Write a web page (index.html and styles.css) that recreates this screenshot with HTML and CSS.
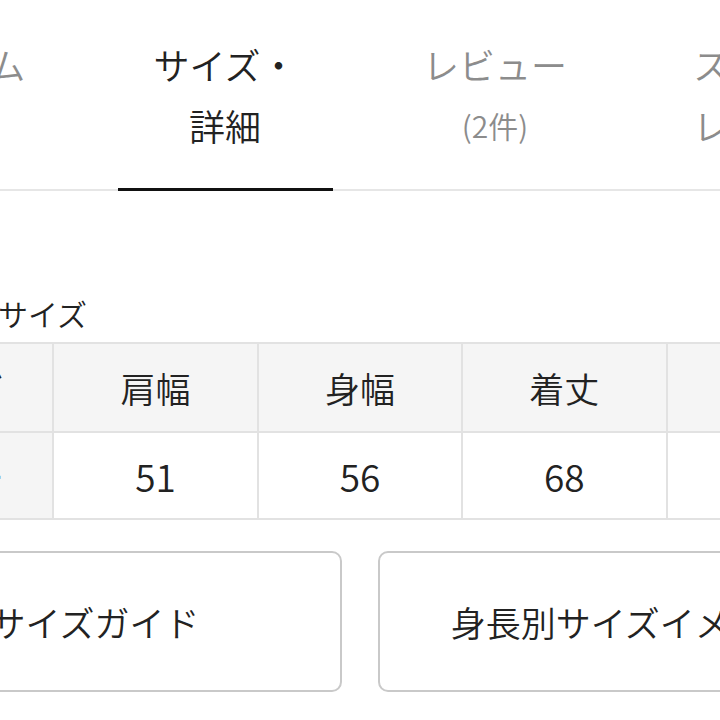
FILE: index.html
```html
<!DOCTYPE html>
<html lang="ja">
<head>
<meta charset="utf-8">
<link rel="stylesheet" href="styles.css">
</head>
<body>
<div class="page">
  <nav class="tabs">
    <div class="tab">アイテム<br>説明</div>
    <div class="tab active">サイズ・<br>詳細</div>
    <div class="tab">レビュー<br><span class="count">(2件)</span></div>
    <div class="tab">スタッフ<br>レビュー</div>
  </nav>
  <section class="content">
    <h2 class="title">平置き採寸サイズ</h2>
    <table class="size-table">
      <tr class="head">
        <th>サイズ</th>
        <th>肩幅</th>
        <th>身幅</th>
        <th>着丈</th>
        <th>袖丈</th>
      </tr>
      <tr class="data">
        <th>フリー</th>
        <td>51</td>
        <td>56</td>
        <td>68</td>
        <td>22</td>
      </tr>
    </table>
    <div class="buttons">
      <div class="btn">サイズガイド</div>
      <div class="btn">身長別サイズイメージ</div>
    </div>
  </section>
</div>
</body>
</html>
```

FILE: styles.css
```css
html, body {
  margin: 0;
  padding: 0;
  background: #fff;
}
body {
  width: 720px;
  height: 720px;
  overflow: hidden;
  font-family: "Noto Sans CJK JP", "Noto Sans", sans-serif;
  font-weight: 350;
  color: #222;
}
.page {
  width: 1080px;
  margin-left: -180px;
}
.tabs {
  display: flex;
  background: linear-gradient(#e6e6e6, #e6e6e6) left bottom / 100% 2px no-repeat;
}
.tab {
  width: 270px;
  flex: none;
  display: flex;
  flex-direction: column;
  align-items: center;
  box-sizing: border-box;
  padding-top: 34px;
  height: 191px;
  font-size: 36px;
  line-height: 61px;
  text-align: center;
  color: #8c8c8c;
}
.tab .count {
  font-size: 30px;
}
.tab::after {
  content: "";
  display: block;
  width: 215px;
  height: 3px;
  margin-top: auto;
}
.tab.active {
  color: #222;
}
.tab.active::after {
  background: #111;
}
.content {
  padding: 0 28px;
}
.title {
  margin: 102px 0 9px;
  font-size: 30px;
  font-weight: 350;
  line-height: 40px;
  color: #222;
}
.size-table {
  border-collapse: collapse;
  width: 1024px;
  table-layout: fixed;
}
.size-table th,
.size-table td {
  border: 2px solid #e2e2e2;
  font-size: 35px;
  font-weight: 350;
  text-align: center;
  padding: 0;
  color: #222;
}
.size-table .head th {
  height: 87px;
  background: #f5f5f5;
}
.size-table .data th {
  background: #f5f5f5;
}
.size-table .data td,
.size-table .data th {
  height: 85px;
}
.size-table .data td {
  font-size: 37px;
}
.buttons {
  display: flex;
  gap: 36px;
  margin-top: 31px;
}
.btn {
  flex: 1;
  height: 141px;
  box-sizing: border-box;
  border: 2px solid #c9c9c9;
  border-radius: 10px;
  display: flex;
  align-items: center;
  justify-content: center;
  font-size: 35px;
  color: #222;
}
```
